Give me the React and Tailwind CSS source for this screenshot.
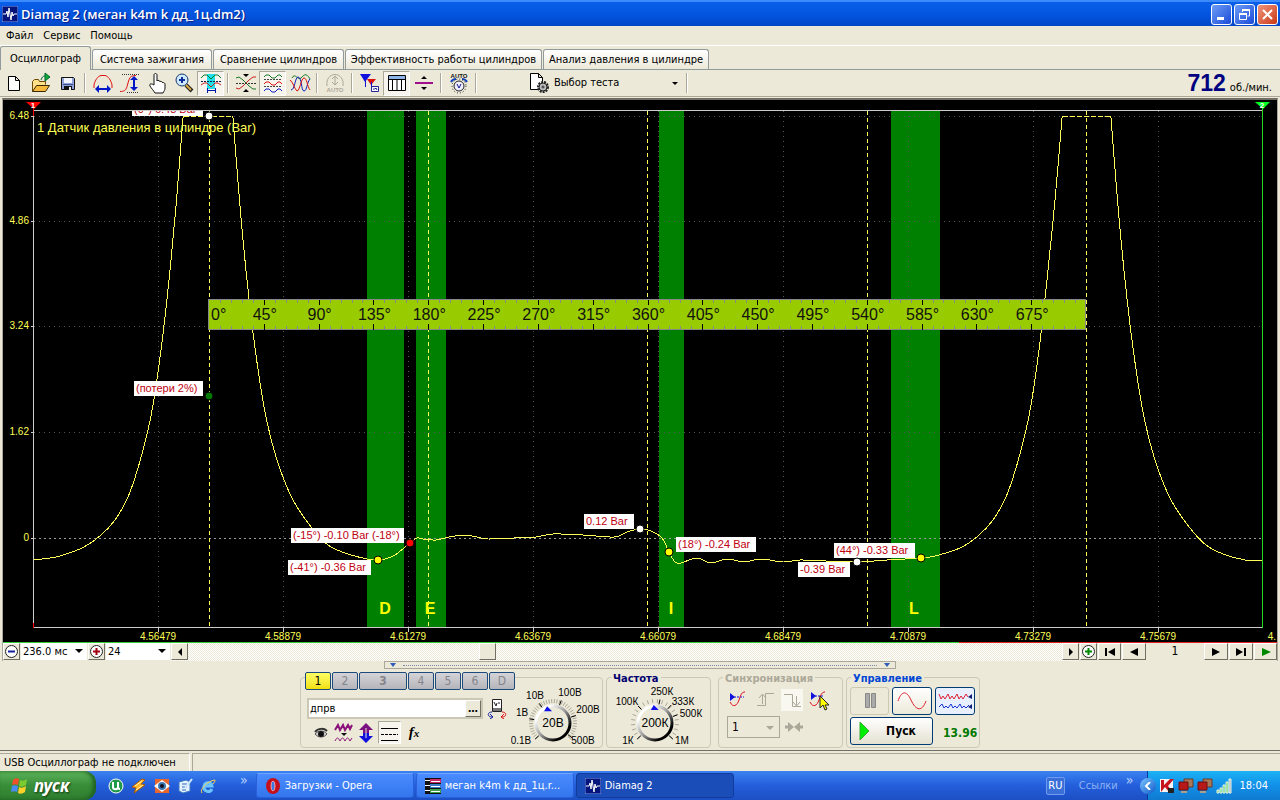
import { useState } from "react";
import clsx from "clsx";

const BANDS = [
  { x: 367, width: 37, label: "D", labelX: 385 },
  { x: 416, width: 30, label: "E", labelX: 430 },
  { x: 659, width: 25, label: "I", labelX: 671 },
  { x: 891, width: 49, label: "L", labelX: 914 },
];

const LEVELS = [
  { y: 116, label: "6.48" },
  { y: 221, label: "4.86" },
  { y: 326, label: "3.24" },
  { y: 432, label: "1.62" },
  { y: 538, label: "0" },
];

const TIMES = [
  { x: 158, label: "4.56479" },
  { x: 283, label: "4.58879" },
  { x: 408, label: "4.61279" },
  { x: 533, label: "4.63679" },
  { x: 658, label: "4.66079" },
  { x: 783, label: "4.68479" },
  { x: 908, label: "4.70879" },
  { x: 1033, label: "4.73279" },
  { x: 1158, label: "4.75679" },
];

const STROKE_LINES = [209, 428, 647, 867, 1086];

// Pressure trace, split where the signal is clipped at the top
const LEFT_RISE = [
  [34, 560], [50, 558], [60, 556], [82, 548], [100, 536], [115, 520],
  [128, 497], [138, 468], [147, 434], [153, 405], [161, 350], [169, 280],
  [176, 206], [183, 118],
];
const MIDDLE = [
  [233, 118], [240, 206], [247, 280], [255, 348], [265, 412], [277, 460],
  [293, 500], [312, 528], [328, 545], [345, 553], [367, 559], [378, 560],
  [385, 559], [395, 555], [410, 543], [417, 538], [423, 539], [436, 540],
  [449, 537], [464, 535], [477, 537], [488, 539], [514, 538], [536, 537],
  [553, 534], [583, 535], [614, 537], [627, 532], [640, 529], [651, 531],
  [662, 538], [669, 552], [675, 562], [681, 563], [692, 559], [701, 559],
  [711, 563], [727, 559], [744, 562], [761, 559], [783, 562], [800, 560],
  [826, 561], [857, 562], [887, 560], [921, 558], [935, 556], [960, 548],
  [978, 536], [993, 520], [1006, 497], [1016, 468], [1025, 434], [1031, 405],
  [1039, 350], [1047, 280], [1055, 200], [1062, 118],
];
const RIGHT_FALL = [
  [1111, 118], [1118, 206], [1125, 280], [1133, 348], [1143, 412],
  [1155, 460], [1171, 500], [1190, 528], [1206, 545], [1223, 554],
  [1245, 560], [1262, 561],
];

const MARKS = [
  { x: 209, y: 116, color: "#fff" },
  { x: 209, y: 396, color: "#007800" },
  { x: 378, y: 560, color: "#ff0" },
  { x: 410, y: 543, color: "#f00" },
  { x: 640, y: 529, color: "#fff" },
  { x: 669, y: 552, color: "#ff0" },
  { x: 857, y: 562, color: "#fff" },
  { x: 921, y: 558, color: "#ff0" },
];

const NOTES = [
  { x: 134, y: 381, width: 69, text: "(потери 2%)" },
  { x: 291, y: 528, width: 113, text: "(-15°) -0.10 Bar (-18°)" },
  { x: 288, y: 560, width: 83, text: "(-41°) -0.36 Bar" },
  { x: 584, y: 514, width: 50, text: "0.12 Bar" },
  { x: 676, y: 537, width: 80, text: "(18°) -0.24 Bar" },
  { x: 834, y: 543, width: 81, text: "(44°) -0.33 Bar" },
  { x: 798, y: 562, width: 52, text: "-0.39 Bar" },
];

// Catmull-Rom spline through the points
function smooth(points) {
  let d = `M${points[0][0]} ${points[0][1]}`;
  for (let i = 0; i < points.length - 1; i++) {
    const p0 = points[i - 1] || points[i];
    const p1 = points[i];
    const p2 = points[i + 1];
    const p3 = points[i + 2] || p2;
    const c1 = [p1[0] + (p2[0] - p0[0]) / 6, p1[1] + (p2[1] - p0[1]) / 6];
    const c2 = [p2[0] - (p3[0] - p1[0]) / 6, p2[1] - (p3[1] - p1[1]) / 6];
    d += `C${c1[0]} ${c1[1]} ${c2[0]} ${c2[1]} ${p2[0]} ${p2[1]}`;
  }
  return d;
}

function Ruler() {
  const step = 877 / 80;
  const ticks = Array.from({ length: 79 }, (_, i) => i + 1);
  const labels = Array.from({ length: 16 }, (_, i) => i);
  return (
    <g>
      <rect x="208.5" y="299.5" width="877" height="30" fill="#9c0" stroke="#888" />
      {ticks.map((i) => {
        const x = Math.round(209 + i * step) + 0.5;
        const major = i % 5 === 0;
        return (
          <path
            key={i}
            d={major ? `M${x} 300v5M${x} 324v6` : `M${x} 300v3M${x} 326v3`}
            stroke={major ? "#000" : "#888"}
          />
        );
      })}
      {labels.map((i) => (
        <text
          key={i}
          x={i === 0 ? 211 : 210 + i * 5 * step}
          y="320"
          textAnchor={i === 0 ? "start" : "middle"}
          className="text-[16px]"
          fill="#111"
        >
          {i * 45}°
        </text>
      ))}
    </g>
  );
}

function Chart() {
  return (
    <svg
      viewBox="3 100 1274 542"
      className="block w-full h-auto bg-black font-['Liberation_Sans',sans-serif] text-[11px]"
      role="img"
      aria-label="Датчик давления в цилиндре"
    >
      <g shapeRendering="crispEdges" fill="none">
        {BANDS.map((b) => (
          <rect key={b.label} x={b.x} y="111" width={b.width} height="517" fill="#008000" />
        ))}
        {LEVELS.map((l) => (
          <path
            key={l.y}
            d={`M34 ${l.y + 0.5}H1262`}
            stroke={l.y === 538 ? "#999" : "#555"}
            strokeDasharray={l.y === 538 ? "2 3" : "1 4"}
          />
        ))}
        {TIMES.map((t) => (
          <g key={t.x}>
            <path d={`M${t.x + 0.5} 111V628`} stroke="#555" strokeDasharray="1 4" />
            <path d={`M${t.x + 0.5} 628v4`} stroke="#ccc" />
          </g>
        ))}
        {LEVELS.map((l) => (
          <path key={l.y} d={`M31 ${l.y + 0.5}h3`} stroke="#ccc" />
        ))}
        <path d="M33.5 110V627.5H1262" stroke="#ccc" />
        <path d="M33 110.5H1262" stroke="#ccc" />
        <path d="M33.5 104V116M33.5 623v5" stroke="#f00" />
        <path d="M1262.5 104V628" stroke="#2d2" />
        {STROKE_LINES.map((x) => (
          <path key={x} d={`M${x + 0.5} 111V628`} stroke="#ff5" strokeDasharray="4 3" />
        ))}
        <path d={smooth(LEFT_RISE)} stroke="#ff5" />
        <path d={smooth(MIDDLE)} stroke="#ff5" />
        <path d={smooth(RIGHT_FALL)} stroke="#ff5" />
        <path d="M183 118l1-2M232 116l1 2M1062 118l1-2M1110 116l1 2" stroke="#ff5" />
        <path d="M184 116.5H232M1063 116.5H1110" stroke="#ff5" strokeDasharray="5 2" />
      </g>

      <path d="M26 102h15l-7 7z" fill="#f00" />
      <text x="33" y="108" textAnchor="middle" fill="#fff" className="text-[8px] font-bold">1</text>
      <path d="M1255 102h15l-7 7z" fill="#0f2" />
      <text x="1262" y="108" textAnchor="middle" fill="#fff" className="text-[8px] font-bold">2</text>

      <clipPath id="plot">
        <rect x="34" y="111" width="1228" height="516" />
      </clipPath>
      <g clipPath="url(#plot)">
        <rect x="132" y="101" width="71" height="15" fill="#fff" />
        <text x="134" y="113" fill="#c00010">(0°) 6.48 Bar</text>
      </g>
      <text x="37" y="132" fill="#ff5" className="text-[13px]">
        1 Датчик давления в цилиндре (Bar)
      </text>

      <g fill="#ff5" className="text-[10px]">
        {LEVELS.map((l) => (
          <text key={l.y} x="29" y={l.y + 3} textAnchor="end">{l.label}</text>
        ))}
        {TIMES.map((t) => (
          <text key={t.x} x={t.x} y="640" textAnchor="middle">{t.label}</text>
        ))}
        <text x="1276" y="640" textAnchor="end">4.</text>
      </g>

      <Ruler />

      {BANDS.map((b) => (
        <text
          key={b.label}
          x={b.labelX}
          y="614"
          textAnchor="middle"
          fill="#ff0"
          className="text-[16px] font-bold"
        >
          {b.label}
        </text>
      ))}
      {NOTES.map((n) => (
        <g key={n.text}>
          <rect x={n.x} y={n.y} width={n.width} height="15" fill="#fff" />
          <text x={n.x + 2} y={n.y + 11} fill="#c00010">{n.text}</text>
        </g>
      ))}
      {MARKS.map((m) => (
        <circle key={`${m.x}-${m.y}`} cx={m.x} cy={m.y} r="4" fill={m.color} stroke="#000" />
      ))}
    </svg>
  );
}

function Icon({ children, className = "w-[22px] h-[22px]", box = "0 0 22 22" }) {
  return (
    <svg viewBox={box} className={clsx("shrink-0", className)} fill="none" aria-hidden="true">
      {children}
    </svg>
  );
}

const icons = {
  page: (
    <path d="M5.500 4.500h7l4 4v10h-11zM12.500 4.500v4h4" fill="#fff" stroke="#000" />
  ),
  open: (
    <>
      <path d="M2.500 19.500v-10l2-2h4l1 2h6v3" fill="#ffe08a" stroke="#6b4a00" />
      <path d="M2.500 19.500l4-6h13l-4 6z" fill="#f5b93c" stroke="#3a2800" />
      <path d="M11 8c1-3 2-4 4-4" stroke="#063" />
      <path d="M15 1l5 4-5 4z" fill="#1a3" stroke="#063" />
    </>
  ),
  save: (
    <>
      <path d="M4.500 5.500h12l1 1v11h-13z" fill="#8fa0d8" stroke="#111" />
      <path d="M7 6h8v5H7z" fill="#f4f6ff" />
      <path d="M6 12h10v1H6z" fill="#3d4f8c" />
      <path d="M7 14h8v4H7z" fill="#111" />
      <path d="M12 15h2v3h-2z" fill="#eee" />
    </>
  ),
  width: (
    <>
      <path d="M2 16V13C3 8 6 4 9 3.500h4c3 .5 6 4.500 7 9.500v3" stroke="#e01010" />
      <path d="M5 17h12" stroke="#0018c8" strokeWidth="2" />
      <path d="M7 13l-4 4 4 4zM15 13l4 4-4 4z" fill="#0018c8" />
    </>
  ),
  height: (
    <>
      <path d="M1 19.500c4 0 6-1 7-5l2-7c1-3 3-4 7-4" stroke="#e01010" />
      <path d="M3 2.500h17M8 20.500h12" stroke="#333" strokeDasharray="1 1" />
      <path d="M15 5v13" stroke="#0018c8" strokeWidth="2" />
      <path d="M11 8l4-4 4 4zM11 15l4 4 4-4z" fill="#0018c8" />
    </>
  ),
  hand: (
    <path
      d="M8 12V3c0-2 3-2 3 0v6c0-1 3-1 3 1 0-1 2-1 3 1 0-1 2 0 2 1v4c0 2-1 3-2 5H9c-1-2-4-5-5-7s1-3 4-1z"
      fill="#fff"
      stroke="#111"
    />
  ),
  zoom: (
    <>
      <path d="M13 13l6 6" stroke="#222" strokeWidth="4" />
      <path d="M13 13l5 5" stroke="#d9a441" strokeWidth="2" />
      <circle cx="9" cy="8" r="6" fill="#cfeaff" stroke="#14386e" />
      <path d="M6 8h6M9 5v6" stroke="#0a2c9c" strokeWidth="2" />
    </>
  ),
  band: (
    <>
      <path d="M7 2h8v15H7z" fill="#1fe0ea" />
      <path d="M1 6l3-3h3l4 4 4-4h3l3 3" stroke="#087a2a" />
      <path d="M1 9.500h20" stroke="#124" strokeDasharray="2 1" />
      <path d="M1 13l3-2h3l4 4 4-4h3l3 2" stroke="#c22" />
      <path d="M7.500 16v5M15.500 16v5M7 18.500h8" stroke="#0018a8" />
    </>
  ),
  squeeze: (
    <>
      <path d="M11 5L8 2h6zM11 17l-3 3h6z" fill="#000" />
      <path d="M1 16l3 1 4-3 6-6 4-3h3" stroke="#c22" />
      <path d="M1 6l3-1 4 3 6 6 4 3h3" stroke="#187a28" />
      <path d="M1 11.500h20" stroke="#333" strokeDasharray="2 1" />
    </>
  ),
  split: (
    <>
      <path d="M2 5l2-2h3l3 3h3l3-3h2l2 2" stroke="#187a28" />
      <path d="M2 12l2-2h3l3 3h3l3-3h2l2 2" stroke="#d11" />
      <path d="M2 19l2-2h3l3 3h3l3-3h2l2 2" stroke="#1020c0" />
      <path d="M2 7.500h18M2 14.500h18" stroke="#444" strokeDasharray="2 1" />
    </>
  ),
  overlay: (
    <>
      <path d="M3 6c3-6 6 3 9 0s5-6 9 1" stroke="#187a28" />
      <path d="M2 18c4 0 4-13 7-13 4 0 3 14 6 14s3-9 6-12" stroke="#1020c0" />
      <path d="M1 8c3 2 4 8 7 11 3 0 4-13 7-13s3 8 6 12" stroke="#d11" />
    </>
  ),
  autoOff: (
    <>
      <path d="M3 14C2 7 6 2.500 11 2.500s9 4.500 8 11.500" stroke="#aca899" />
      <path d="M11 4v9M8 7l3-3 3 3M8 10l3 3 3-3" stroke="#aca899" />
      <text x="11" y="20" textAnchor="middle" fill="#aca899" className="font-['Liberation_Sans',sans-serif] text-[6px] font-bold">AUTO</text>
    </>
  ),
  flags: (
    <>
      <path d="M1 2h11L6 10z" fill="#11d" />
      <path d="M8 7h9l-5 6z" fill="#d11" />
      <path d="M6.500 9v6M12.500 10v8" stroke="#11d" />
      <path d="M12.500 14.500h7v5h-7z" fill="#fff" stroke="#229" />
      <path d="M14 17h2l1-1 1 2" stroke="#229" />
    </>
  ),
  table: (
    <>
      <path d="M2.500 3.500h17v15h-17z" fill="#fff" stroke="#000" />
      <path d="M3 4h16v3H3z" fill="#8fb4e8" />
      <path d="M3 7.500h16M6.500 7.500v11M11 7.500v11M15.500 7.500v11" stroke="#000" />
    </>
  ),
  level: (
    <>
      <path d="M2 11h18" stroke="#a0108c" strokeWidth="2" />
      <path d="M11 4l3 3H8zM11 18l3-3H8z" fill="#000" />
    </>
  ),
  autoKnob: (
    <>
      <text x="11" y="6" textAnchor="middle" fill="#111" className="font-['Liberation_Sans',sans-serif] text-[6px] font-bold">AUTO</text>
      <path d="M3 10c1-2 3-3 5-3M19 10c-1-2-3-3-5-3" stroke="#14b" strokeWidth="2" />
      <circle cx="11" cy="14" r="7" stroke="#222" strokeDasharray="1 2" />
      <circle cx="11" cy="14" r="5" fill="#eef" stroke="#222" />
      <path d="M9 12l2 4 2-4" stroke="#118" />
    </>
  ),
  docGear: (
    <>
      <path d="M2.500 1.500h8l4 4v12h-12zM10.500 1.500v4h4" fill="#fff" stroke="#000" />
      <circle cx="15" cy="15" r="5" stroke="#222" strokeWidth="2" strokeDasharray="2 1" />
      <circle cx="15" cy="15" r="4" fill="#bbb" stroke="#222" />
      <circle cx="15" cy="15" r="1" fill="#fff" stroke="#222" />
    </>
  ),
};

function AppIcon() {
  return (
    <Icon className="w-4 h-4" box="0 0 16 16">
      <path d="M0 0h16v16H0z" fill="#06157c" stroke="#7f9ce8" />
      <path d="M1 8h3l1-3 1 6 1-9 2 12 1-8 1 4 1-2h3" stroke="#fff" />
    </Icon>
  );
}

function ToolButton({ icon, label, pressed, disabled }) {
  return (
    <button
      type="button"
      aria-label={label}
      disabled={disabled}
      className={clsx(
        "flex w-[27px] h-[25px] items-center justify-center border",
        pressed
          ? "border-[#aca899] border-r-white border-b-white bg-[#f6f4ec]"
          : "border-transparent"
      )}
    >
      <Icon>{icons[icon]}</Icon>
    </button>
  );
}

function Separator() {
  return (
    <div className="flex w-2 justify-center">
      <div className="w-0.5 h-5 bg-[#aca899] border-r border-white" />
    </div>
  );
}

function TitleBar() {
  return (
    <header className="flex h-[26px] items-center gap-[3px] px-0.5 bg-gradient-to-b from-[#0a5fe8] via-[#0355e0] to-[#0248c8] border-t-2 border-[#3b8bff]">
      <AppIcon />
      <h1 className="grow font-['Open_Sans','Noto_Sans',sans-serif] text-[13px] leading-[22px] font-semibold text-white [text-shadow:1px_1px_1px_#0a1883]">
        Diamag 2 (меган k4m k дд_1ц.dm2)
      </h1>
      <div className="flex gap-0.5">
        <button type="button" aria-label="Свернуть" className="flex w-[21px] h-[21px] items-center justify-center rounded-[3px] border border-white bg-gradient-to-br from-[#6f9bf5] to-[#1c49d8]">
          <Icon className="w-[17px] h-[17px]" box="0 0 17 17"><path d="M4 11h7v3H4z" fill="#fff" /></Icon>
        </button>
        <button type="button" aria-label="Восстановить" className="flex w-[21px] h-[21px] items-center justify-center rounded-[3px] border border-white bg-gradient-to-br from-[#6f9bf5] to-[#1c49d8]">
          <Icon className="w-[17px] h-[17px]" box="0 0 17 17">
            <path d="M6.500 6V4h7v6h-2" stroke="#fff" />
            <path d="M6 3h8v2H6z" fill="#fff" />
            <path d="M3.500 7.500h7v6h-7z" stroke="#fff" />
            <path d="M3 7h8v2H3z" fill="#fff" />
          </Icon>
        </button>
        <button type="button" aria-label="Закрыть" className="flex w-[21px] h-[21px] items-center justify-center rounded-[3px] border border-white bg-gradient-to-br from-[#f0937a] to-[#c8350e]">
          <Icon className="w-[17px] h-[17px]" box="0 0 17 17"><path d="M4 4l9 9M13 4l-9 9" stroke="#fff" strokeWidth="2" /></Icon>
        </button>
      </div>
    </header>
  );
}

const TABS = [
  { label: "Осциллограф", width: "w-[91px]" },
  { label: "Система зажигания", width: "w-[120px]" },
  { label: "Сравнение цилиндров", width: "w-[131px]" },
  { label: "Эффективность работы цилиндров", width: "w-[197px]" },
  { label: "Анализ давления в цилиндре", width: "w-[166px]" },
];

function Tabs() {
  const [active, setActive] = useState(0);
  return (
    <div role="tablist" className="flex h-6 items-end gap-px border-b border-[#919b9c]">
      {TABS.map((tab, i) => (
        <button
          key={tab.label}
          type="button"
          role="tab"
          aria-selected={i === active}
          onClick={() => setActive(i)}
          className={clsx(
            "rounded-t-[3px] border border-b-0 border-[#919b9c] whitespace-nowrap",
            tab.width,
            i === active
              ? "h-6 -mb-px bg-[#ece9d8]"
              : "h-5 bg-gradient-to-b from-white to-[#ece9d8]"
          )}
        >
          {tab.label}
        </button>
      ))}
    </div>
  );
}

function Toolbar() {
  return (
    <div className="flex h-[27px] items-center border-b border-[#aca899]">
      <ToolButton icon="page" label="Новый" />
      <ToolButton icon="open" label="Открыть" />
      <ToolButton icon="save" label="Сохранить" />
      <Separator />
      <ToolButton icon="width" label="По ширине" />
      <ToolButton icon="height" label="По высоте" />
      <ToolButton icon="hand" label="Рука" />
      <ToolButton icon="zoom" label="Увеличить" />
      <ToolButton icon="band" label="Диапазон" pressed />
      <Separator />
      <ToolButton icon="squeeze" label="Сжать" />
      <ToolButton icon="split" label="Разделить" pressed />
      <ToolButton icon="overlay" label="Наложить" />
      <Separator />
      <ToolButton icon="autoOff" label="Авто" disabled />
      <Separator />
      <ToolButton icon="flags" label="Метки" />
      <ToolButton icon="table" label="Таблица" pressed />
      <ToolButton icon="level" label="Уровень" />
      <Separator />
      <ToolButton icon="autoKnob" label="Автонастройка" />
      <Separator />
      <button type="button" className="ml-12 flex w-[155px] items-center gap-1 whitespace-nowrap">
        <Icon>{icons.docGear}</Icon>
        <span className="grow text-left">Выбор теста</span>
        <Icon className="mr-1 w-2 h-2" box="0 0 8 8"><path d="M1 3h6L4 6z" fill="#000" /></Icon>
      </button>
      <Separator />
      <p className="ml-auto flex items-baseline gap-1 pr-2">
        <strong className="font-['Liberation_Sans',sans-serif] text-[23px] leading-[26px] text-[#000080]">712</strong>
        <span>об./мин.</span>
      </p>
    </div>
  );
}

const SMALL_BUTTON =
  "flex h-[17px] items-center justify-center border border-white border-r-[#716f64] border-b-[#716f64] bg-[#ece9d8]";

function NavButton({ label, width = "w-[17px]", color = "#000", d }) {
  return (
    <button type="button" aria-label={label} className={clsx(SMALL_BUTTON, width)}>
      <Icon className="w-3 h-3" box="0 0 12 12"><path d={d} fill={color} /></Icon>
    </button>
  );
}

function ZoomButton({ label, color, d }) {
  return (
    <button type="button" aria-label={label} className={clsx(SMALL_BUTTON, "w-[17px]")}>
      <Icon className="w-[13px] h-[13px]" box="0 0 13 13">
        <circle cx="6.500" cy="6.500" r="6" fill="#fff" stroke="#222" />
        <path d={d} stroke={color} strokeWidth="2" />
      </Icon>
    </button>
  );
}

function MiniSelect({ label, value, width }) {
  return (
    <div className={clsx("relative h-[17px] bg-white", width)}>
      <select aria-label={label} className="w-full h-[17px] appearance-none bg-white pl-0.5 leading-[17px]">
        <option>{value}</option>
      </select>
      <Icon className="pointer-events-none absolute right-1 top-1 w-2 h-2" box="0 0 8 8">
        <path d="M0 2h8L4 6z" fill="#000" />
      </Icon>
    </div>
  );
}

function TimeBar() {
  return (
    <div>
      <div className="flex h-px">
        <div className="grow bg-[#3c3]" />
        <div className="w-1/4 bg-[#d22]" />
      </div>
      <div className="flex h-[18px] gap-px">
        <ZoomButton label="Уменьшить" color="#1020a0" d="M3 6.500h7" />
        <MiniSelect label="Развертка" value="236.0 мс" width="w-[66px]" />
        <ZoomButton label="Увеличить" color="#a00010" d="M3 6.500h7M6.500 3v7" />
        <MiniSelect label="Кадры" value="24" width="w-16" />
        <div className="flex grow bg-[repeating-conic-gradient(#fff_0_25%,#ece9d8_0_50%)] bg-[length:2px_2px]">
          <NavButton label="Влево" d="M8 2v8L4 6z" />
          <div className="w-[32%]" />
          <div className={clsx(SMALL_BUTTON, "w-[17px]")} />
          <div className="ml-auto">
            <NavButton label="Вправо" d="M4 2v8l4-4z" />
          </div>
        </div>
        <ZoomButton label="Добавить кадр" color="#080" d="M3 6.500h7M6.500 3v7" />
        <NavButton label="В начало" width="w-[23px]" d="M1 2h2v8H1zM11 2v8L4 6z" />
        <NavButton label="Назад" width="w-6" d="M10 2v8L2 6z" />
        <output className="w-14 text-center leading-[17px] text-[12px]">1</output>
        <NavButton label="Вперед" width="w-6" d="M2 2v8l8-4z" />
        <NavButton label="В конец" width="w-6" d="M9 2h2v8H9zM1 2v8l7-4z" />
        <NavButton label="Воспроизвести" width="w-[23px]" color="#080" d="M2 2v8l9-4z" />
      </div>
    </div>
  );
}

function Splitter() {
  return (
    <div className="mx-auto flex w-2/5 h-2 items-center justify-between gap-1.5 border border-[#aca899] px-1">
      <Icon className="w-2 h-1" box="0 0 8 4"><path d="M1 0h6L4 4z" fill="#2a5bb8" /></Icon>
      <div className="grow border-t border-dotted border-[#7a8db0]" />
      <Icon className="w-2 h-1" box="0 0 8 4"><path d="M1 0h6L4 4z" fill="#2a5bb8" /></Icon>
    </div>
  );
}

function Group({ title, titleClass, width, children }) {
  return (
    <section className={clsx("mt-2 h-[71px] rounded-[4px] border border-[#cbc8b6]", width)}>
      {title && (
        <h2 className={clsx("-mt-[7px] ml-1 w-fit bg-[#ece9d8] px-0.5 text-[11px] leading-[16px] font-bold", titleClass)}>
          {title}
        </h2>
      )}
      {children}
    </section>
  );
}

// Rotary switch; angles in degrees, clockwise from the top
function Knob({ value, cx, labels, pointer, ticks, box, className }) {
  const at = (deg, r) => {
    const a = (deg * Math.PI) / 180;
    return [cx + r * Math.sin(a), 46 - r * Math.cos(a)];
  };
  const marks = Array.from({ length: ticks }, (_, i) => -132 + (264 * i) / (ticks - 1));
  const [px, py] = at(pointer, 14);
  const id = `knob${value}`;
  return (
    <svg viewBox={box} className={clsx("font-['Liberation_Sans',sans-serif] text-[10px]", className)} role="img" aria-label={value}>
      <linearGradient id={id} x1="0" y1="0" x2="1" y2="1">
        <stop offset="0.200" stopColor="#fff" />
        <stop offset="0.500" stopColor="#999" />
        <stop offset="0.800" stopColor="#000" />
      </linearGradient>
      {marks.map((deg) => {
        const [x1, y1] = at(deg, 20);
        const [x2, y2] = at(deg, 24);
        return <path key={deg} d={`M${x1} ${y1}L${x2} ${y2}`} stroke="#aca899" />;
      })}
      {labels.map((l) => {
        const [x1, y1] = at(l.deg, 19);
        const [x2, y2] = at(l.deg, 24);
        return (
          <g key={l.text}>
            <path d={`M${x1} ${y1}L${x2} ${y2}`} stroke="#000" />
            <text x={l.x} y={l.y} textAnchor="middle">{l.text}</text>
          </g>
        );
      })}
      <circle cx={cx} cy="46" r="17" fill="#ece9d8" stroke={`url(#${id})`} strokeWidth="3" />
      <path d={`M${px} ${py - 4}l5 5h-8z`} fill="#11e" />
      <text x={cx} y="50" textAnchor="middle" className="text-[12px]">{value}</text>
    </svg>
  );
}

const CHANNELS = [
  { label: "1", width: "w-[26px]", on: true },
  { label: "2", width: "w-[26px]" },
  { label: "3", width: "w-12" },
  { label: "4", width: "w-[26px]" },
  { label: "5", width: "w-[26px]" },
  { label: "6", width: "w-[26px]" },
  { label: "D", width: "w-[26px]" },
];

function ChannelGroup() {
  return (
    <Group width="w-[303px]">
      <div className="flex">
        <div className="w-[217px] shrink-0 pl-1">
          <div className="-mt-1.5 flex w-fit gap-px bg-[#ece9d8]">
            {CHANNELS.map((c) => (
              <button
                key={c.label}
                type="button"
                className={clsx(
                  "h-[18px] rounded-[2px] border border-[#1c4a7c] text-[12px] leading-4",
                  c.width,
                  c.on
                    ? "bg-gradient-to-b from-[#ffff60] to-[#f0e000] text-black"
                    : "bg-gradient-to-b from-[#d4d4d8] to-[#b4b4ba] text-[#85858c]",
                  c.label === "3" && "font-bold"
                )}
              >
                {c.label}
              </button>
            ))}
          </div>
          <div className="mt-2 ml-0.5 flex items-center gap-1">
            <div className="flex w-44 h-[21px] items-center border-2 border-[#cbc8b6] bg-white">
              <input aria-label="Имя канала" defaultValue="дпрв" className="w-0 grow pl-px outline-none" />
              <button type="button" className="w-4 h-[17px] border border-white border-r-[#716f64] border-b-[#716f64] bg-[#ece9d8] leading-[10px] font-bold">
                …
              </button>
            </div>
            <Icon className="w-5 h-5" box="0 0 20 20">
              <path d="M5.500 .5h9v12h-9z" fill="#fff" stroke="#222" />
              <path d="M6 9h8v3H6z" fill="#777" />
              <path d="M7 3l2 4 1-3M12 3v2" stroke="#222" />
              <path d="M5 13c-5 0-5 5 0 5M3 15l3 3-3 2" stroke="#1020a0" />
              <path d="M15 13c5 0 5 5 0 5M17 15l-3 3 3 2" stroke="#d11" />
            </Icon>
          </div>
          <div className="mt-0.5 ml-[5px] flex h-[23px] items-center">
            <button type="button" aria-label="Показать канал" className="w-6">
              <Icon className="w-[22px] h-5" box="0 0 22 20">
                <path d="M5 11c3-4 9-4 12 0-3 4-9 4-12 0z" fill="#ccc" stroke="#555" />
                <path d="M5 9c3-4 9-4 12-1" stroke="#333" strokeWidth="2" />
                <circle cx="11" cy="11" r="3" fill="#111" />
              </Icon>
            </button>
            <button type="button" aria-label="Фильтр" className="w-[22px]">
              <Icon className="w-5 h-5" box="0 0 20 20">
                <path d="M1 7l3-5 2 5 3-5 2 5 3-5 2 4 2-4" stroke="#8a107a" strokeWidth="2" />
                <path d="M7 10h6l-3 3z" fill="#111" />
                <path d="M1 18c2-4 3-4 5 0 2-4 3-4 5 0 2-4 3-4 5 0l2-3" stroke="#8a107a" />
              </Icon>
            </button>
            <button type="button" aria-label="Инвертировать" className="w-[22px]">
              <Icon className="w-5 h-5" box="0 0 20 20">
                <path d="M10 0l7 7h-4v3H7V7H3z" fill="#7a1080" />
                <path d="M10 20l7-7h-4v-3H7v3H3z" fill="#11d" />
                <path d="M10 5v10" stroke="#ece9d8" />
              </Icon>
            </button>
            <button type="button" aria-label="Сетка" className="w-[23px] h-[23px] border border-[#aca899] border-r-white border-b-white bg-[#f6f4ec]">
              <Icon className="w-5 h-5" box="0 0 20 20">
                <path d="M2 5.500h17M2 17.500h17" stroke="#000" />
                <path d="M2 11.500h17" stroke="#000" strokeDasharray="3 1" />
              </Icon>
            </button>
            <button type="button" aria-label="Функция" className="w-[26px] font-['Liberation_Serif',serif] text-[15px] leading-5 font-bold italic">
              f<span className="text-[11px]">x</span>
            </button>
          </div>
        </div>
        <Knob
          value="20В"
          cx={42}
          pointer={-25}
          ticks={40}
          box="0 1 94 70"
          className="-ml-[7px] w-[94px] h-[70px] shrink-0"
          labels={[
            { text: "0.1В", deg: -132, x: 10, y: 67 },
            { text: "1В", deg: -80, x: 11, y: 39 },
            { text: "10В", deg: -35, x: 24, y: 22 },
            { text: "100В", deg: 20, x: 59, y: 19 },
            { text: "200В", deg: 72, x: 77, y: 36 },
            { text: "500В", deg: 128, x: 72, y: 67 },
          ]}
        />
      </div>
    </Group>
  );
}

function FrequencyGroup() {
  return (
    <Group title="Частота" titleClass="text-[#000070]" width="w-[105px]">
      <Knob
        value="200К"
        cx={48}
        pointer={-5}
        ticks={22}
        box="0 10 100 60"
        className="w-[100px] h-[60px]"
        labels={[
          { text: "1К", deg: -132, x: 21, y: 67 },
          { text: "100К", deg: -45, x: 20, y: 28 },
          { text: "250К", deg: 12, x: 55, y: 18 },
          { text: "333К", deg: 42, x: 76, y: 28 },
          { text: "500К", deg: 70, x: 84, y: 40 },
          { text: "1М", deg: 132, x: 75, y: 67 },
        ]}
      />
    </Group>
  );
}

function SyncGroup() {
  return (
    <Group title="Синхронизация" titleClass="text-[#aca899]" width="w-[125px]">
      <div className="mt-0.5 ml-2 flex gap-[5px]">
        <button type="button" aria-label="Уровень синхронизации">
          <Icon>
            <path d="M3 4l5 4-5 4z" fill="#11d" />
            <path d="M7 8h10" stroke="#11d" strokeDasharray="2 1" />
            <path d="M3 13c3 6 7 4 9-2s3-8 6-8" stroke="#e01020" />
          </Icon>
        </button>
        <button type="button" aria-label="По фронту" disabled>
          <Icon>
            <path d="M3 16.500h8.500v-12H20M8.500 15V6M5 9l3.500-4L12 9" stroke="#aca899" />
          </Icon>
        </button>
        <button type="button" aria-label="По спаду" disabled className="bg-[#f8f7f0]">
          <Icon>
            <path d="M3 5.500h8.500v12H20M15.500 7v9M12 13l3.500 4 3.500-4" stroke="#aca899" />
          </Icon>
        </button>
        <button type="button" aria-label="Выбрать уровень">
          <Icon>
            <path d="M3 3l5 4-5 4z" fill="#11d" />
            <path d="M7 7h8" stroke="#11d" strokeDasharray="2 1" />
            <path d="M2 13c3 6 7 4 9-2s3-8 6-8" stroke="#e01020" />
            <path d="M12 7v12l3-3 2 5 2-1-2-4h4z" fill="#ff0" stroke="#222" />
          </Icon>
        </button>
      </div>
      <div className="mt-[5px] ml-2 flex items-center gap-1">
        <div className="relative w-[53px]">
          <select aria-label="Канал синхронизации" disabled className="w-full h-[22px] appearance-none border border-[#aca899] bg-[#ece9d8] pl-1 text-[12px] text-black opacity-100">
            <option>1</option>
          </select>
          <Icon className="pointer-events-none absolute right-1.5 top-2 w-2 h-2" box="0 0 8 8"><path d="M0 2h8L4 6z" fill="#aca899" /></Icon>
        </div>
        <Icon className="w-5 h-3" box="0 0 20 12">
          <path d="M1 6h4M15 6h4" stroke="#aca899" strokeWidth="3" />
          <path d="M4 1l6 5-6 5zM16 1l-6 5 6 5z" fill="#aca899" />
        </Icon>
      </div>
    </Group>
  );
}

function ControlGroup() {
  return (
    <Group title="Управление" titleClass="text-[#0046d5]" width="w-[134px]">
      <div className="ml-[3px] flex gap-[3px]">
        <button type="button" aria-label="Пауза" disabled className="flex w-[39px] h-7 items-center justify-center rounded-[3px] border border-[#cbc8b6]">
          <Icon className="w-4 h-4" box="0 0 16 16">
            <path d="M3.500 .5h4v14h-4zM9.500 .5h4v14h-4z" fill="#aaa" stroke="#888" />
          </Icon>
        </button>
        <button type="button" aria-label="Один канал" className="flex w-10 h-7 items-center justify-center rounded-[3px] border border-[#003c74] bg-gradient-to-b from-white to-[#ece9d8]">
          <Icon className="w-[30px] h-5" box="0 0 30 20">
            <path d="M1 10C4 1 9-2 14 9s11 12 15 1" stroke="#e02030" />
          </Icon>
        </button>
        <button type="button" aria-label="Все каналы" className="flex w-10 h-7 items-center justify-center rounded-[3px] border border-[#003c74] bg-[#e8f0ff]">
          <Icon className="w-[34px] h-5" box="0 0 34 20">
            <path d="M1 3l2 5 2-3 2 3 3-5 2 5 2-3 2 3 3-5 2 5 2-3 2 3 3-5 2 3" stroke="#e02030" />
            <path d="M1 16l3-3 2 4 2-2 2 2 3-4 2 4 2-2 2 2 3-4 2 4 2-2 2 2 3-3" stroke="#1030d0" />
            <path d="M34 3v5l-4-2zM34 13v5l-4-2z" fill="#127" />
          </Icon>
        </button>
      </div>
      <div className="ml-[3px] mt-0.5 flex items-center gap-2.5">
        <button type="button" className="flex w-[83px] h-7 items-center rounded-[3px] border border-[#003c74] bg-gradient-to-b from-white to-[#e4e1d0] pl-2 text-[12px] font-bold">
          <Icon className="w-[11px] h-5" box="0 0 11 20"><path d="M1 1l9 9-9 9z" fill="#0e0" stroke="#3a3" /></Icon>
          <span className="grow text-center">Пуск</span>
        </button>
        <span className="pt-1 text-[12px] font-bold text-[#007800]">13.96</span>
      </div>
    </Group>
  );
}

function StatusBar() {
  return (
    <footer className="flex h-[21px] gap-0.5 border-t border-[#716f64] pt-0.5">
      <p className="w-[190px] border-t border-r border-[#aca899] border-r-white pl-1 leading-[17px] whitespace-nowrap">
        USB Осциллограф не подключен
      </p>
      <div className="grow border-t border-l border-[#aca899]" />
    </footer>
  );
}

function TaskButton({ icon, label, active }) {
  return (
    <button
      type="button"
      className={clsx(
        "flex w-[158px] h-[25px] items-center gap-1 rounded-[3px] border pl-2 text-left whitespace-nowrap text-white",
        active
          ? "border-[#123c9c] bg-[#1b4db8]"
          : "border-[#2a5fd8] border-t-[#6fa4ff] bg-gradient-to-b from-[#4a8cff] to-[#3375ec]"
      )}
    >
      {icon}
      {label}
    </button>
  );
}

function TrayPcs() {
  return (
    <Icon className="w-4 h-4" box="0 0 16 16">
      <path d="M6 1h9v8H6z" fill="#a87858" stroke="#6a3a28" />
      <path d="M1 4h9v8H1z" fill="#b81818" stroke="#6a1010" />
      <path d="M3 13h6v2H3z" fill="#a8a090" />
    </Icon>
  );
}

function Taskbar() {
  return (
    <nav className="flex h-[29px] items-center bg-gradient-to-b from-[#3b82f0] via-[#245edb] to-[#1c4fc4]">
      <button type="button" className="flex w-24 h-[29px] items-center gap-1 rounded-r-xl bg-gradient-to-b from-[#5cb55c] via-[#388e38] to-[#2f7d2f] pl-2.5 text-[17px] leading-6 font-bold italic text-white shadow-[inset_-3px_0_4px_#1f5f1f] [text-shadow:1px_1px_2px_#143c14] font-['Noto_Sans',sans-serif]">
        <Icon className="w-5 h-[18px]" box="0 0 20 18">
          <path d="M3 3c2-2 4-2 6-1L8 8C6 7 4 7 2 8z" fill="#f0502a" />
          <path d="M10 3c2 1 4 1 7-1l-1 6c-3 2-5 2-7 1z" fill="#7ccc30" />
          <path d="M2 9c2-1 4-1 6 0l-1 6c-2-1-4-1-6 0z" fill="#4a8cf5" />
          <path d="M9 10c2 1 4 1 7-1l-1 6c-3 2-5 2-7 1z" fill="#ffcf2a" />
        </Icon>
        пуск
      </button>
      <div className="ml-3 flex items-center gap-[7px]">
        <Icon className="w-4 h-4" box="0 0 16 16">
          <circle cx="8" cy="8" r="7" fill="#1f9a48" stroke="#fff" />
          <path d="M5 4v5c0 3 5 3 5 0V4M10 9c0 2 1 2 2 2" stroke="#fff" strokeWidth="2" />
        </Icon>
        <Icon className="w-4 h-4" box="0 0 16 16">
          <path d="M11 1L1 9l4 1-2 5L14 7l-4-1 4-4z" fill="#ffb52a" stroke="#a85a08" />
          <path d="M11 3L4 8M12 7l-7 5" stroke="#fff4b0" />
        </Icon>
        <Icon className="w-4 h-4" box="0 0 16 16">
          <path d="M1 1h14v14H1z" fill="#e8672e" />
          <path d="M0 8l8-6 8 6-8 6z" fill="#fff" />
          <circle cx="8" cy="8" r="4" fill="#3d78b4" />
          <circle cx="8" cy="8" r="2" fill="#112" />
        </Icon>
        <Icon className="w-4 h-4" box="0 0 16 16">
          <path d="M2 4l7-2 4 2v9l-7 2-4-2z" fill="#e6f3ff" stroke="#3a78c0" />
          <path d="M5 6h5M5 9h5M5 12h4" stroke="#2a68b8" />
          <path d="M15 1L8 10" stroke="#cfe8ff" strokeWidth="2" />
        </Icon>
        <Icon className="w-4 h-4" box="0 0 16 16">
          <path d="M12 11c-2 4-8 3-8-2s7-6 8-1H5" stroke="#6cc4ff" strokeWidth="3" />
          <path d="M2 15C-1 12 7 3 15 2c0 1 0 2-2 4" stroke="#ffd24a" />
        </Icon>
      </div>
      <span className="ml-6 mb-3 text-[14px] leading-3 text-[#b8d0ff]">»</span>
      <div className="ml-2 flex gap-0.5">
        <TaskButton
          label="Загрузки - Opera"
          icon={
            <Icon className="w-4 h-4" box="0 0 16 16">
              <ellipse cx="8" cy="8" rx="7" ry="8" fill="#c4101c" />
              <ellipse cx="8" cy="8" rx="2" ry="5" fill="#3b78e8" stroke="#f5a0a0" />
            </Icon>
          }
        />
        <TaskButton
          label="меган k4m k дд_1ц.r..."
          icon={
            <Icon className="w-4 h-4" box="0 0 16 16">
              <path d="M0 0h16v16H0z" fill="#111" />
              <path d="M5 1h11v4H5z" fill="#c8286a" />
              <path d="M5 6h11v4H5z" fill="#3a78c8" />
              <path d="M5 11h11v4H5z" fill="#3aa04a" />
              <path d="M0 2.500h5M0 7.500h5M0 12.500h5M6 3.500h9M6 8.500h9M6 13.500h9" stroke="#fff" />
            </Icon>
          }
        />
        <TaskButton label="Diamag 2" active icon={<AppIcon />} />
      </div>
      <div className="ml-auto flex items-center">
        <span className="w-[19px] rounded-[2px] border border-[#6f9bf0] bg-[#3a6fd8] text-center leading-4 text-white">RU</span>
        <span className="ml-3.5 text-[#8fb4f5]">Ссылки</span>
        <span className="ml-2 mb-3 text-[14px] leading-3 text-[#b8d0ff]">»</span>
      </div>
      <div className="ml-3.5 flex h-[29px] items-center gap-[3px] border-l border-[#0a3a9c] bg-gradient-to-b from-[#1eb2f5] via-[#1290e8] to-[#0f7ad0] pr-3 text-white">
        <button type="button" aria-label="Показать значки" className="-ml-2 flex w-4 h-4 items-center justify-center rounded-full bg-gradient-to-br from-[#7cc4ff] to-[#0a58c8]">
          <Icon className="w-2 h-2" box="0 0 8 8"><path d="M6 0L2 4l4 4" stroke="#fff" strokeWidth="2" /></Icon>
        </button>
        <Icon className="w-4 h-4" box="0 0 16 16">
          <path d="M1 1h13v13H1z" fill="#f5f5f5" />
          <path d="M2 2h3v5l6-6h4L9 8l5 6h-4L6 9l-4 5z" fill="#c8141c" />
          <path d="M9 10h6v5H9z" fill="#222" />
        </Icon>
        <TrayPcs />
        <TrayPcs />
        <Icon className="w-4 h-4" box="0 0 16 16">
          <path d="M1 12h2v3H1zM4 10h2v5H4zM7 7h2v8H7zM10 4h2v11h-2z" fill="#5ad05a" stroke="#e8f8e8" />
          <path d="M13 1h2v14h-2z" fill="#aab" stroke="#e8f8e8" />
        </Icon>
        <time className="ml-1">18:04</time>
      </div>
    </nav>
  );
}

export default function App() {
  return (
    <div className="min-h-screen bg-[#ece9d8] font-['DejaVu_Sans_Condensed','DejaVu_Sans',sans-serif] text-[11px] leading-4 text-black">
      <TitleBar />
      <nav className="flex h-5 items-center gap-2.5 border-b border-white pl-1.5">
        <button type="button">Файл</button>
        <button type="button">Сервис</button>
        <button type="button">Помощь</button>
      </nav>
      <Tabs />
      <Toolbar />
      <main className="mx-0.5 mt-px border-t-2 border-x border-t-[#716f64] border-x-[#aca899]">
        <Chart />
        <TimeBar />
      </main>
      <Splitter />
      <div className="flex justify-center gap-[3px] pb-0.5">
        <ChannelGroup />
        <FrequencyGroup />
        <div className="w-px" />
        <SyncGroup />
        <ControlGroup />
      </div>
      <StatusBar />
      <Taskbar />
    </div>
  );
}
